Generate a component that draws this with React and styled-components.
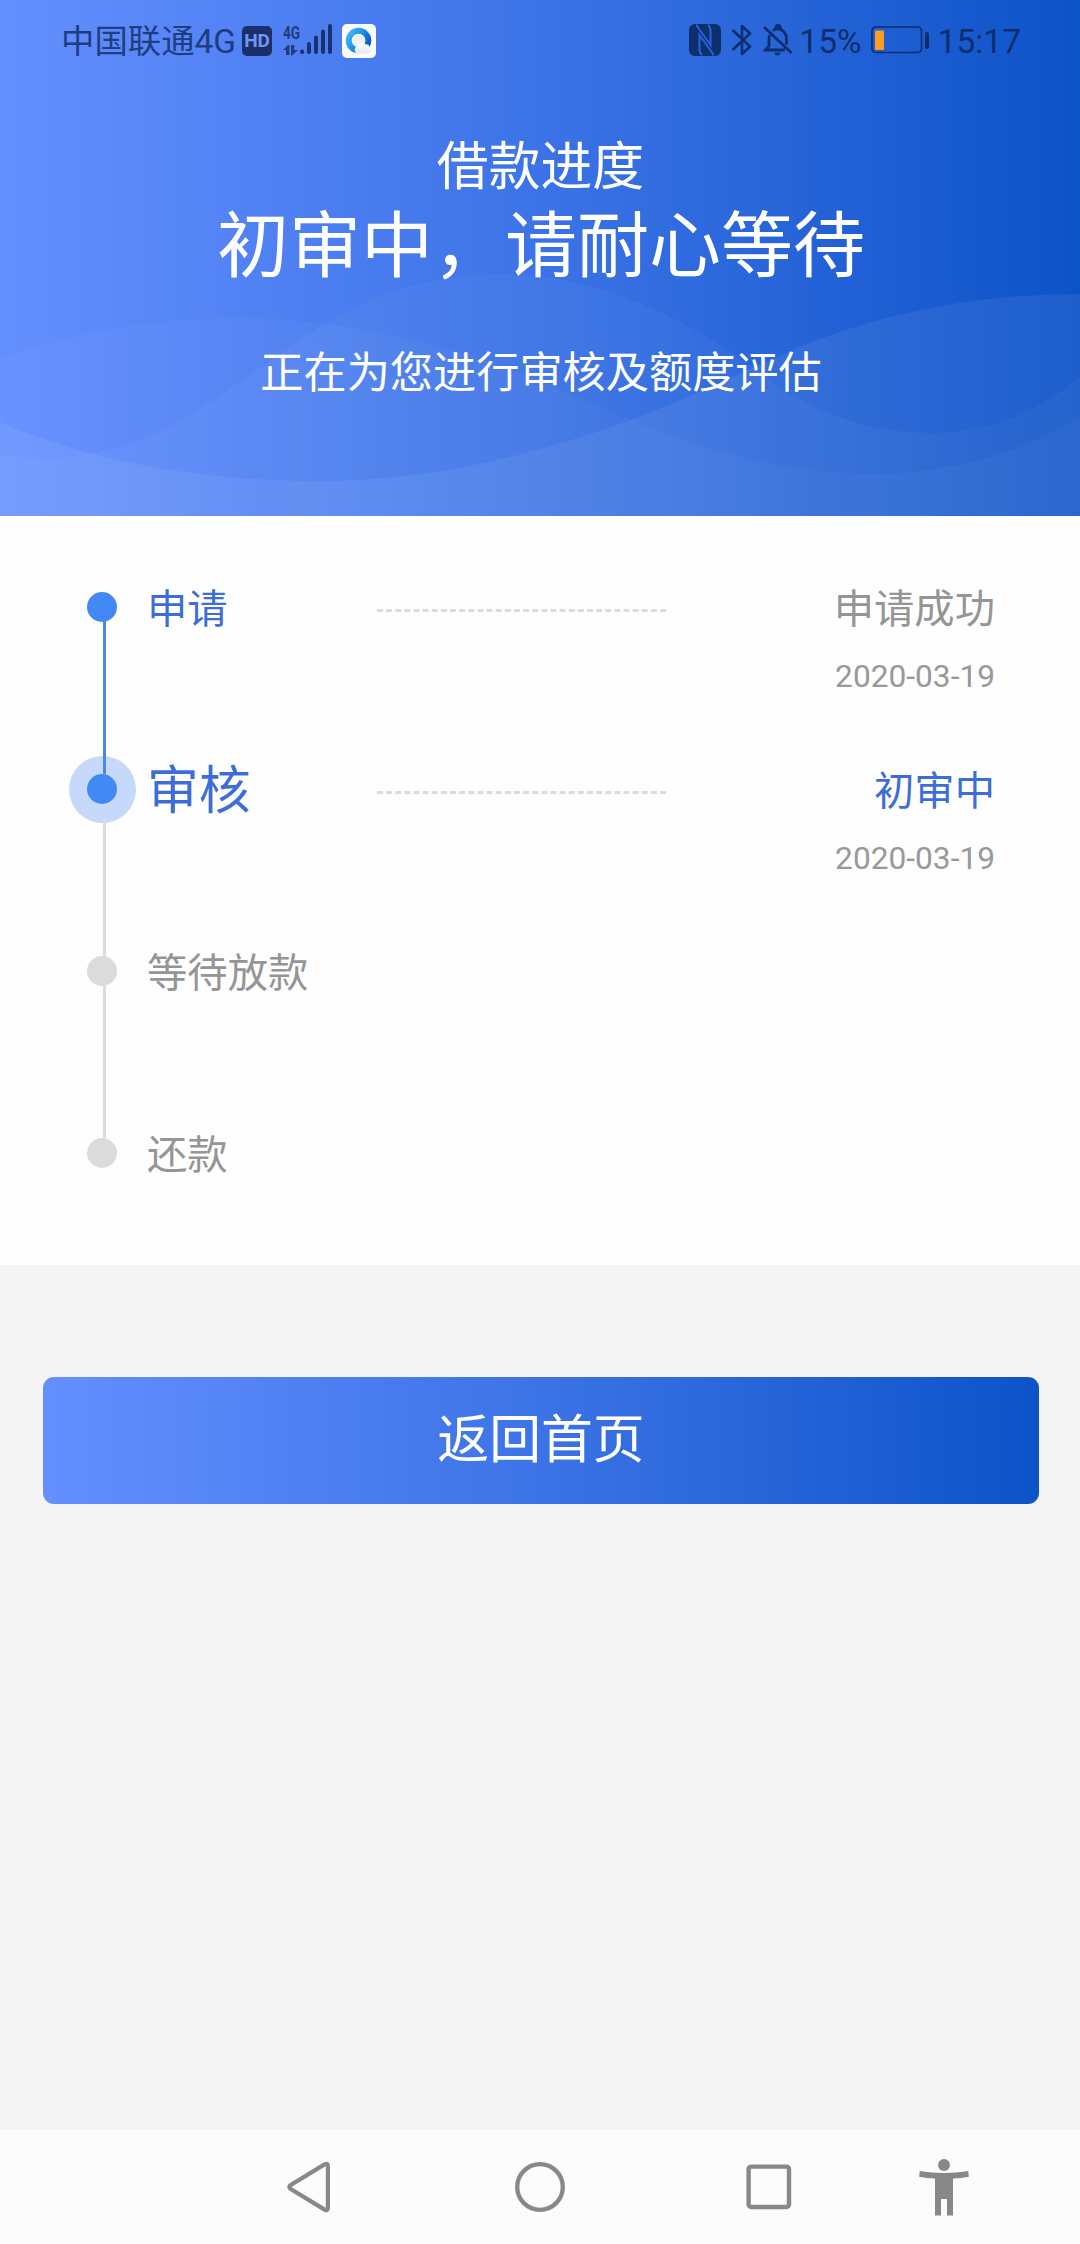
import React from 'react';
import styled, { createGlobalStyle } from 'styled-components';

const GlobalStyle = createGlobalStyle`
  * { box-sizing: border-box; }
  body {
    margin: 0;
    background: #f4f4f4;
    font-family: Roboto, "Noto Sans CJK SC", sans-serif;
  }
`;

const Screen = styled.div`
  display: flex;
  flex-direction: column;
  width: 1080px;
  height: 2244px;
  background: #f4f4f4;
`;

const Header = styled.header`
  position: relative;
  height: 516px;
  color: #fff;
  text-align: center;
  background: linear-gradient(90deg, #648fff 0%, #3a72e5 52%, #0d53c8 100%);
`;

const Waves = styled.svg`
  position: absolute;
  inset: 0;
`;

const StatusBar = styled.div`
  position: relative;
  display: flex;
  justify-content: space-between;
  height: 80px;
  padding: 0 59px 0 61px;
`;

const StatusGroup = styled.div`
  display: flex;
  align-items: center;
  height: 80px;
  color: ${(p) => p.$color};
`;

const StatusText = styled.span`
  font-size: ${(p) => p.$size}px;
  font-weight: 400;
  line-height: 80px;
  padding-top: ${(p) => p.$drop || 0}px;
  margin-left: ${(p) => p.$gap || 0}px;
  white-space: nowrap;
`;

const HdBadge = styled.span`
  width: 30px;
  height: 30px;
  margin: 2px 0 0 6px;
  border-radius: 5px;
  background: #1b3068;
  color: #6f97f5;
  font-size: 19px;
  font-weight: 700;
  line-height: 30px;
  text-align: center;
`;

const SignalBox = styled.span`
  display: flex;
  flex-direction: column;
  margin-left: 11px;
  width: 17px;
  height: 34px;
`;

const SignalLabel = styled.span`
  font-size: 18px;
  font-weight: 700;
  line-height: 19px;
  height: 22px;
  transform: scaleX(0.76);
  transform-origin: left center;
  white-space: nowrap;
`;

const Icon = styled.svg`
  flex: none;
  margin-left: ${(p) => p.$gap || 0}px;
`;

const Title = styled.div`
  position: relative;
  margin-top: 50px;
  padding-left: 1px;
  font-size: 51.84px;
  line-height: 76px;
`;

const Headline = styled.div`
  position: relative;
  margin-top: -11px;
  padding-left: 2px;
  font-size: 72px;
  line-height: 104px;
`;

const Subtitle = styled.div`
  position: relative;
  margin-top: 43px;
  padding-left: 2px;
  font-size: 43.2px;
  line-height: 64px;
`;

const Timeline = styled.ol`
  list-style: none;
  margin: 0;
  height: 749px;
  padding: 58px 85px 0 69px;
  background: #fefefe;
`;

const Step = styled.li`
  display: grid;
  grid-template-columns: 67px 241px 289px 1fr;
  height: 182px;
`;

const Rail = styled.div`
  display: flex;
  flex-direction: column;
`;

const Node = styled.div`
  display: flex;
  flex: none;
  align-items: center;
  justify-content: center;
  width: 67px;
  height: 67px;
  padding: 0 1px 1px 0;
  border-radius: 50%;
  background: ${(p) => (p.$current ? '#c6d9fb' : 'transparent')};
`;

const Dot = styled.div`
  position: relative;
  z-index: 2;
  width: 30px;
  height: 30px;
  border-radius: 50%;
  background: ${(p) => (p.$on ? '#4389f5' : '#dbdbdb')};
`;

const Connector = styled.div`
  position: relative;
  z-index: 1;
  flex: none;
  width: 3px;
  height: ${(p) => (p.$current ? 141 : 153)}px;
  margin: ${(p) => (p.$current ? -5 : -20)}px 0 0 34px;
  background: ${(p) => (p.$on ? '#4b88e8' : '#dcdcdc')};
`;

const Label = styled.div`
  margin-left: 11px;
  padding-top: 2px;
  font-size: ${(p) => (p.$large ? 51.84 : 40.32)}px;
  line-height: 68px;
  color: ${(p) => (p.$on ? '#3d6ed8' : '#959595')};
`;

const Dashes = styled.div`
  height: 3px;
  margin-top: 35px;
  border-top: 3px dashed #dcdcdc;
`;

const Result = styled.div`
  grid-column: 4;
  padding-top: 2px;
  text-align: right;
`;

const State = styled.div`
  font-size: 40.32px;
  line-height: 68px;
  color: ${(p) => (p.$on ? '#3d6ed8' : '#959595')};
`;

const DateText = styled.div`
  font-size: 31.68px;
  line-height: 40px;
  margin-top: 13px;
  color: #999;
`;

const HomeButton = styled.button`
  flex: none;
  width: 996px;
  height: 127px;
  margin: 112px 0 0 43px;
  padding: 0;
  border: 0;
  border-radius: 11px;
  color: #fff;
  font: 400 51.84px/124px Roboto, "Noto Sans CJK SC", sans-serif;
  background: linear-gradient(90deg, #648fff 0%, #3a72e5 52%, #0d53c8 100%);
`;

const NavBar = styled.nav`
  display: flex;
  align-items: center;
  height: 114px;
  margin-top: auto;
  padding-left: 284px;
  background: #fcfcfc;
`;

const steps = [
  { label: '申请', on: true, state: '申请成功', date: '2020-03-19' },
  { label: '审核', on: true, current: true, state: '初审中', date: '2020-03-19' },
  { label: '等待放款' },
  { label: '还款' },
];

function HeaderWaves() {
  return (
    <Waves width="1080" height="516" viewBox="0 0 1080 516" fill="#fff">
      <path
        fillOpacity=".03"
        d="M0 359C75 332 155 318 238 318C320 318 395 334 461 353C535 375 570 395 631 420C705 450 785 474 867 474C950 474 1020 453 1080 417V516H0Z"
      />
      <path
        fillOpacity=".035"
        d="M0 455C15 457 30 458 45 458C100 458 145 441 182 420C235 388 270 358 327 323C385 288 440 274 499 274C585 274 660 307 729 350C760 370 765 380 790 394C840 422 885 433 932 433C990 433 1040 410 1080 377V516H0Z"
      />
      <path
        fillOpacity=".065"
        d="M0 422C90 461 200 481 317 481C420 481 520 460 631 420C690 398 735 375 788 352C880 312 980 294 1080 294V516H0Z"
      />
    </Waves>
  );
}

function PhoneStatus() {
  return (
    <StatusBar>
      <StatusGroup $color="#223c80">
        <StatusText $size={33.4} $drop={3}>中国联通4G</StatusText>
        <HdBadge>HD</HdBadge>
        <SignalBox>
          <SignalLabel>4G</SignalLabel>
          <svg width="16" height="11" viewBox="0 0 16 11" fill="currentColor">
            <path d="M5 0 0 5h3v5h3.4V0zM8 0h3.2v5H15l-6 5.500H8z" />
          </svg>
        </SignalBox>
        <Icon width="34" height="34" viewBox="0 0 34 34" fill="#1b3272">
          <rect x="0" y="26.500" width="4.200" height="4.500" rx="2" />
          <rect x="7" y="19" width="4" height="12" rx="2" />
          <rect x="14" y="12.500" width="4" height="18.500" rx="2" />
          <rect x="21" y="6.500" width="4" height="24.500" rx="2" />
          <rect x="28" y="1" width="4" height="30" rx="2" />
        </Icon>
        <Icon $gap={8} width="34" height="36" viewBox="0 -2 34 36">
          <defs>
            <linearGradient id="ring" x1="0" y1="0" x2="1" y2=".6">
              <stop offset="0" stopColor="#4fb6f2" />
              <stop offset=".45" stopColor="#1c9df0" />
              <stop offset="1" stopColor="#0f5fd0" />
            </linearGradient>
            <linearGradient id="cloud" x1="0" y1="0" x2="0" y2="1">
              <stop offset="0" stopColor="#fff" />
              <stop offset="1" stopColor="#e6e9ee" />
            </linearGradient>
          </defs>
          <rect width="34" height="34" rx="5" fill="#fbfdff" />
          <circle cx="16.500" cy="16.500" r="9.800" fill="none" stroke="url(#ring)" strokeWidth="6" />
          <circle cx="17" cy="16.500" r="6.300" fill="#edf2f8" />
          <path d="M15 29.500a4 4 0 0 1 .6-7.500 5 5 0 0 1 7.600-1.700 4.200 4.200 0 0 1 4.600 3 3.400 3.400 0 0 1-.8 6.200z" fill="url(#cloud)" />
        </Icon>
      </StatusGroup>
      <StatusGroup $color="#0e2e6c">
        <Icon width="32" height="32" viewBox="0 0 32 32">
          <rect width="32" height="32" rx="6" fill="currentColor" />
          <path
            d="M8 .5V2L21.500 21V7q0-4-2.500-6M24 31.500V30L10.500 11v14q0 4 2.500 6"
            fill="none"
            stroke="#2461d8"
            strokeWidth="2.100"
          />
        </Icon>
        <Icon $gap={10} width="22" height="32" viewBox="0 0 22 32" fill="none" stroke="currentColor" strokeWidth="2.600" strokeLinejoin="round">
          <path d="M1.500 6 19 22.500 11 30V2l8 7.500L1.500 26" />
        </Icon>
        <Icon $gap={10} width="30" height="32" viewBox="0 0 30 32" fill="none" stroke="currentColor" strokeWidth="2.800">
          <path d="M1 3 28.500 29M10 6.500Q15 3 20 7q3.500 3 3.500 8v5.500M6.500 11q-.5 2-.5 5v6l-3.500 4H22M12.500 5q0-3.500 2.500-3.500T17.500 5" />
          <path d="M11.500 28.500h6q-.5 3-3 3t-3-3z" fill="currentColor" stroke="none" />
        </Icon>
        <StatusText $size={33.5} $gap={6} $drop={3}>15%</StatusText>
        <Icon $gap={9} width="60" height="32" viewBox="0 0 60 32">
          <rect x="1" y="3" width="49.500" height="25.500" rx="4" fill="none" stroke="currentColor" strokeWidth="1.700" />
          <rect x="4" y="6.500" width="9" height="19.500" rx="1" fill="#ff9c1f" />
          <rect x="54" y="8" width="4" height="17" rx="2" fill="currentColor" />
        </Icon>
        <StatusText $size={33.5} $gap={7} $drop={3}>15:17</StatusText>
      </StatusGroup>
    </StatusBar>
  );
}

function SystemNav() {
  return (
    <NavBar>
      <Icon width="50" height="56" viewBox="0 0 50 56" fill="none" stroke="#888" strokeWidth="4.200" strokeLinejoin="round">
        <path d="M43.900 7.200Q43.900 3.600 40.600 5.400L6.300 26.200Q4.600 28 6.300 29.800L40.600 50.600Q43.900 52.400 43.900 48.800Z" />
      </Icon>
      <Icon $gap={180} width="52" height="56" viewBox="0 0 52 56" fill="none" stroke="#888" strokeWidth="4.300">
        <circle cx="26" cy="28" r="22.800" />
      </Icon>
      <Icon $gap={178} width="50" height="56" viewBox="0 0 50 56" fill="none" stroke="#888" strokeWidth="4.400">
        <rect x="4.600" y="7.600" width="40.400" height="40.400" rx="2.500" />
      </Icon>
      <Icon $gap={125} width="50" height="60" viewBox="0 0 50 60" fill="#888">
        <circle cx="25" cy="8" r="6" />
        <path d="M.7 14Q25 18 49.300 14l.5 5.700Q42 21.300 34 21.500V58.500h-6V42h-6v16.500h-6V21.500Q8 21.300.2 19.700Z" />
      </Icon>
    </NavBar>
  );
}

export default function App() {
  return (
    <Screen>
      <GlobalStyle />
      <Header>
        <HeaderWaves />
        <PhoneStatus />
        <Title>借款进度</Title>
        <Headline>初审中，请耐心等待</Headline>
        <Subtitle>正在为您进行审核及额度评估</Subtitle>
      </Header>
      <Timeline>
        {steps.map((s, i) => (
          <Step key={s.label}>
            <Rail>
              <Node $current={s.current}>
                <Dot $on={s.on} />
              </Node>
              {i < steps.length - 1 && <Connector $on={s.on && !s.current} $current={s.current} />}
            </Rail>
            <Label $on={s.on} $large={s.current}>{s.label}</Label>
            {s.state && (
              <>
                <Dashes />
                <Result>
                  <State $on={s.current}>{s.state}</State>
                  <DateText>{s.date}</DateText>
                </Result>
              </>
            )}
          </Step>
        ))}
      </Timeline>
      <HomeButton>返回首页</HomeButton>
      <SystemNav />
    </Screen>
  );
}
